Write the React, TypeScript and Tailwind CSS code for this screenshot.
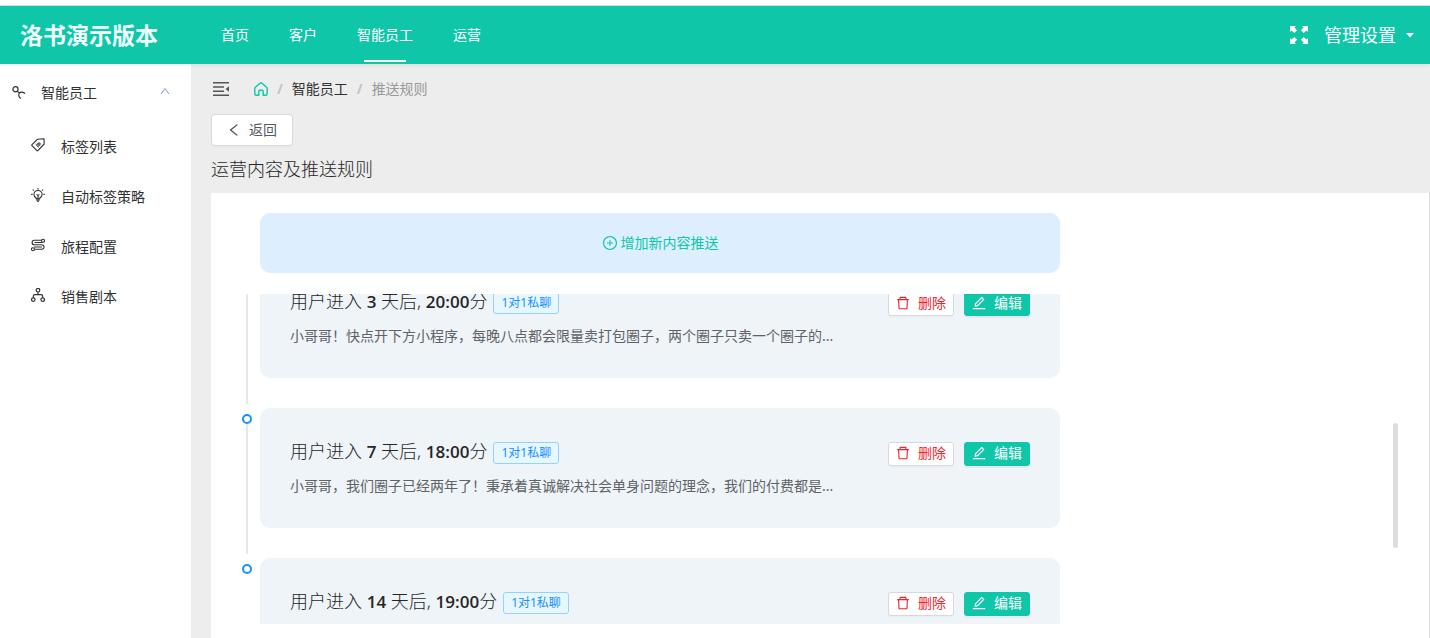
import React from 'react';
import {
  AiOutlineDelete,
  AiOutlineEdit,
  AiOutlineLeft,
  AiOutlinePlusCircle,
  AiOutlineUp,
} from 'react-icons/ai';

interface PushRule {
  id: number;
  day: number;
  time: string;
  channel: string;
  content?: string;
}

const navItems = ['首页', '客户', '智能员工', '运营'];
const activeNav = '智能员工';

const rules: PushRule[] = [
  { id: 1, day: 3, time: '20:00', channel: '1对1私聊', content: '小哥哥！快点开下方小程序，每晚八点都会限量卖打包圈子，两个圈子只卖一个圈子的...' },
  { id: 2, day: 7, time: '18:00', channel: '1对1私聊', content: '小哥哥，我们圈子已经两年了！秉承着真诚解决社会单身问题的理念，我们的付费都是...' },
  { id: 3, day: 14, time: '19:00', channel: '1对1私聊' },
];

const iconProps = { width: 14, height: 14, viewBox: '0 0 14 14', fill: 'none', stroke: 'currentColor' };

const StaffIcon = () => (
  <svg {...iconProps} strokeWidth="1.2">
    <circle cx="3.5" cy="3.3" r="2.6" />
    <path d="M5.3 5.2 7.4 7C8.8 5.6 11.6 5.6 13 7.8M7.4 7C6.2 8.6 6.6 11.2 8.8 12.6" />
  </svg>
);

const TagIcon = () => (
  <svg {...iconProps} strokeWidth="1.1">
    <path d="M6.6 1.2 13 .8 13.2 6 6.9 12.7Q6.4 13.2 5.9 12.7L.9 7.7Q.6 7.2 1 6.7Z" strokeLinejoin="round" />
    <path d="M4.6 6 8 9.4M6 4.8 9.2 8M7.6 4.4 9.8 6.6M5 7.6 8.6 4.6M6.4 9 9.6 5.4" strokeWidth=".8" />
  </svg>
);

const BulbIcon = () => (
  <svg {...iconProps} strokeWidth="1.1">
    <path d="M5.2 10C3.8 9.2 2.9 8 2.9 6.6a4.1 4.1 0 0 1 8.2 0c0 1.4-.9 2.6-2.3 3.4v.8H5.2ZM5.2 12h3.6M6 13.2h2M7 0v1.5M.2 6.4h1.4M12.4 6.4h1.4M1.8 1.6l1.1 1M12.2 1.6l-1.1 1M5.6 6.4 7 7.6l1.4-1.2M7 7.6v3" />
  </svg>
);

const RouteIcon = () => (
  <svg {...iconProps} strokeWidth="1.1">
    <circle cx="12" cy="2.8" r="1.5" />
    <circle cx="2" cy="11.2" r="1.5" />
    <path d="M10.5 2.2H3.4a2.3 2.3 0 0 0 0 4.6h7.4a2.2 2.2 0 0 1 0 4.4H3.6M3.6 4.5h8M3 9h8" />
  </svg>
);

const TreeIcon = () => (
  <svg {...iconProps} strokeWidth="1.2">
    <circle cx="7" cy="2.2" r="1.8" />
    <circle cx="2.3" cy="11.6" r="1.8" />
    <circle cx="11.7" cy="11.6" r="1.8" />
    <path d="M7 4v2.6M2.3 9.8V8.2Q2.3 6.6 3.9 6.6h6.2q1.6 0 1.6 1.6v1.6" />
  </svg>
);

const FoldIcon = () => (
  <svg width="16" height="14" viewBox="0 0 16 14" fill="none" stroke="currentColor" strokeWidth="1.5">
    <path d="M0 .8h16M0 5h11M0 9.2h11M0 13.2h16" />
    <path d="M16 4.2v5.6L12.6 7Z" fill="currentColor" stroke="none" />
  </svg>
);

const HomeIcon = () => (
  <svg {...iconProps} strokeWidth="1.4">
    <path d="M4.8 13.2H2.2Q.8 13.2.8 11.8V6.6q0-.8.6-1.3L6 1.2q1-.8 2 0l4.6 4.1q.6.5.6 1.3v5.2q0 1.4-1.4 1.4H9.2V9.4q0-1.2-1-1.2H5.8q-1 0-1 1.2Z" strokeLinejoin="round" />
  </svg>
);

const FullscreenIcon = () => (
  <svg width="18" height="18" viewBox="0 0 18 18" fill="currentColor">
    <path d="M0 0h6L4.4 1.6 7.1 4.3 4.3 7.1 1.6 4.4 0 6ZM18 0v6l-1.6-1.6-2.7 2.7-2.8-2.8 2.7-2.7L12 0ZM0 18v-6l1.6 1.6 2.7-2.7 2.8 2.8-2.7 2.7L6 18ZM18 18h-6l1.6-1.6-2.7-2.7 2.8-2.8 2.7 2.7L18 12Z" />
  </svg>
);

const menuItems = [
  { label: '标签列表', icon: <TagIcon /> },
  { label: '自动标签策略', icon: <BulbIcon /> },
  { label: '旅程配置', icon: <RouteIcon /> },
  { label: '销售剧本', icon: <TreeIcon /> },
];

const Latin: React.FC<{ children: React.ReactNode }> = ({ children }) => (
  <span className="font-['Open_Sans'] text-[17px] font-semibold">{children}</span>
);

const Header = () => (
  <header className="relative z-10 flex h-[58px] shrink-0 items-center bg-[#0fc6a9] text-white shadow-[0_1px_4px_rgba(0,21,41,0.08)]">
    <div className="w-[221px] pl-5 text-[23px] font-bold text-[#f0fffc]">洛书演示版本</div>
    <nav className="flex h-full gap-10 text-sm">
      {navItems.map(item => (
        <a key={item} href="#" className="relative flex items-center">
          {item}
          {item === activeNav && <span className="absolute inset-x-[7px] bottom-[2px] h-[2px] bg-white" />}
        </a>
      ))}
    </nav>
    <div className="ml-auto flex items-center pr-4">
      <button aria-label="全屏"><FullscreenIcon /></button>
      <button className="ml-4 flex items-center gap-[10px] text-lg">
        管理设置
        <svg width="8" height="5" viewBox="0 0 8 5" fill="currentColor"><path d="M0 0h8L4 4.6Z" /></svg>
      </button>
    </div>
  </header>
);

const Sidebar = () => (
  <aside className="w-[191px] shrink-0 bg-white text-sm text-[#303133]">
    <button className="flex h-[58px] w-full items-center pl-3 pr-5">
      <StaffIcon />
      <span className="ml-[15px]">智能员工</span>
      <AiOutlineUp size={12} className="mb-1 ml-auto text-[#8fa9c2]" />
    </button>
    <ul>
      {menuItems.map(item => (
        <li key={item.label}>
          <a href="#" className="flex h-[50px] items-center gap-4 pl-[31px]">
            <span className="pb-1">{item.icon}</span>
            {item.label}
          </a>
        </li>
      ))}
    </ul>
  </aside>
);

const RuleItem: React.FC<{ rule: PushRule; last: boolean }> = ({ rule, last }) => (
  <li className="relative pb-[30px] pl-[49px]">
    {!last && <span className="absolute bottom-1 left-[35px] top-[11px] w-[2px] bg-[#e8e8e8]" />}
    <span className="absolute left-[31px] top-[6px] size-[10px] rounded-full border-2 border-[#1890ff] bg-white" />
    <div className="flex h-[120px] max-w-[800px] items-start justify-between rounded-[10px] bg-[#eff4f9] p-[30px]">
      <div>
        <h3 className="flex h-7 items-center text-lg leading-6 text-[#262626]">
          <span className="whitespace-pre pb-[2px] font-light">
            用户进入 <Latin>{rule.day}</Latin> 天后, <Latin>{rule.time}</Latin>分
          </span>
          <span className="ml-[6px] mt-[2px] h-[22px] rounded-[3px] border border-[#91d5ff] bg-[#e6f7ff] px-[7px] text-xs leading-5 text-[#1890ff]">
            {rule.channel}
          </span>
        </h3>
        {rule.content && <p className="mt-2 text-sm leading-6 text-[#606266]">{rule.content}</p>}
      </div>
      <div className="mt-1 flex gap-[10px] text-sm">
        <button className="flex h-6 items-center gap-[7px] rounded-[3px] border border-[#d9d9d9] bg-white pb-[2px] pl-[6px] pr-[7px] text-[#f5222d] shadow-[0_2px_0_rgba(0,0,0,0.02)]">
          <AiOutlineDelete size={16} />
          删除
        </button>
        <button className="flex h-6 items-center gap-[7px] rounded-[3px] border border-[#0fc6a9] bg-[#0fc6a9] pb-[2px] pl-[6px] pr-[7px] text-white shadow-[0_2px_0_rgba(0,0,0,0.04)]">
          <AiOutlineEdit size={16} />
          编辑
        </button>
      </div>
    </div>
  </li>
);

export default function App() {
  return (
    <div className="flex h-screen flex-col overflow-hidden bg-white pt-[5px] font-['Noto_Sans','Noto_Sans_CJK_SC',sans-serif]">
      <div className="h-px shrink-0 bg-[#dcdfe0]" />
      <Header />
      <div className="flex min-h-0 flex-1 bg-[#ededed]">
        <Sidebar />
        <main className="flex min-w-0 flex-1 flex-col pl-5">
          <div className="flex h-[50px] shrink-0 items-center pl-[2px] text-sm">
            <button aria-label="收起菜单" className="text-[#555]"><FoldIcon /></button>
            <nav className="ml-[25px] flex items-center gap-[9px] text-[#303133]">
              <a href="#" aria-label="首页" className="text-[#0fc6a9]"><HomeIcon /></a>
              <span className="font-bold text-[#c0c4cc]">/</span>
              <a href="#">智能员工</a>
              <span className="font-bold text-[#c0c4cc]">/</span>
              <span className="text-[#999]">推送规则</span>
            </nav>
          </div>
          <button className="flex h-8 shrink-0 items-center gap-[7px] self-start rounded border border-[#d9d9d9] bg-white pl-[14px] pr-[15px] text-sm text-[#595959] shadow-[0_2px_0_rgba(0,0,0,0.02)]">
            <AiOutlineLeft size={16} />
            返回
          </button>
          <h2 className="mb-[10px] mt-[9px] text-lg font-light text-[#262626]">运营内容及推送规则</h2>
          <section className="flex min-h-0 flex-1 flex-col border-r border-[#dedede] bg-white pb-[14px] pt-5">
            <div className="pl-[49px]">
              <button className="flex h-[60px] w-full max-w-[800px] items-center justify-center gap-[3px] rounded-[10px] bg-[#dceeff] text-sm text-[#0fc6a9]">
                <AiOutlinePlusCircle size={16} />
                增加新内容推送
              </button>
            </div>
            <div className="relative mr-[31px] mt-[21px] min-h-0 flex-1 overflow-hidden">
              <ul className="-mt-9">
                {rules.map((rule, index) => (
                  <RuleItem key={rule.id} rule={rule} last={index === rules.length - 1} />
                ))}
              </ul>
              <span className="absolute right-0 top-[129px] h-[125px] w-[5px] rounded-sm bg-[#ddd]" />
            </div>
          </section>
        </main>
      </div>
    </div>
  );
}
